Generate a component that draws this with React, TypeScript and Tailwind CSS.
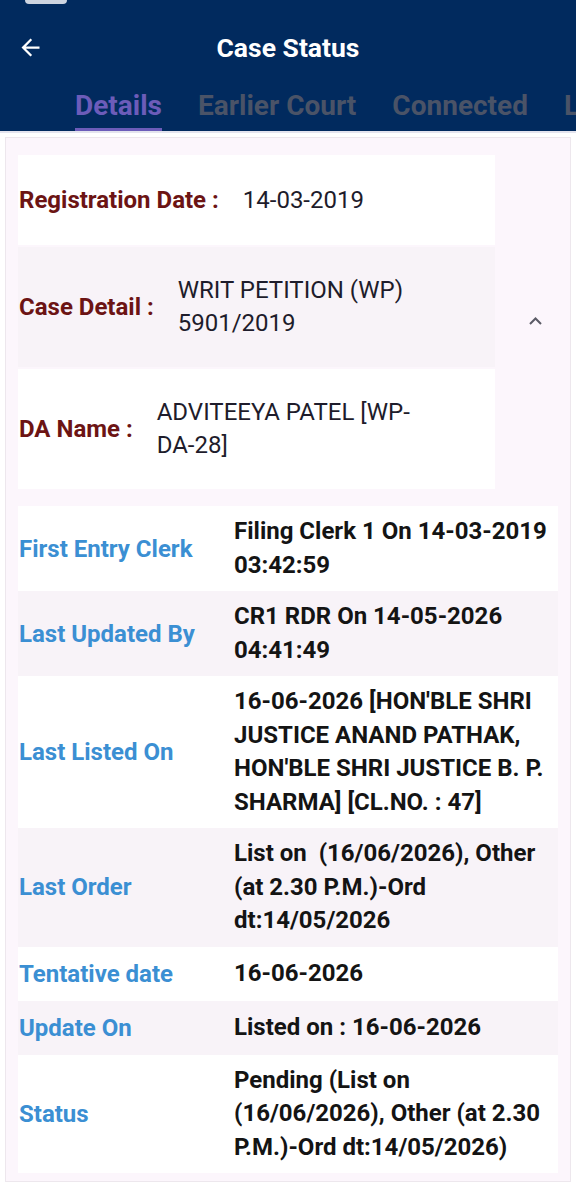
import { ReactNode } from 'react';

const rows: { label: string; value: string; alt?: boolean }[] = [
  { label: 'First Entry Clerk', value: 'Filing Clerk 1 On 14-03-2019 03:42:59' },
  { label: 'Last Updated By', value: 'CR1 RDR On 14-05-2026 04:41:49', alt: true },
  {
    label: 'Last Listed On',
    value: "16-06-2026 [HON'BLE SHRI JUSTICE ANAND PATHAK, HON'BLE SHRI JUSTICE B. P. SHARMA] [CL.NO. : 47]",
  },
  { label: 'Last Order', value: 'List on \u00a0(16/06/2026), Other (at 2.30 P.M.)-Ord dt:14/05/2026', alt: true },
  { label: 'Tentative date', value: '16-06-2026' },
  { label: 'Update On', value: 'Listed on : 16-06-2026', alt: true },
  { label: 'Status', value: 'Pending (List on (16/06/2026), Other (at 2.30 P.M.)-Ord dt:14/05/2026)' },
];

function InfoBlock({ label, children, alt }: { label: string; children: ReactNode; alt?: boolean }) {
  return (
    <div className={`flex items-center py-[27px] pr-[60px] pl-[1px] ${alt ? 'bg-[#f8f3f8]' : 'bg-white'}`}>
      <span className="shrink-0 whitespace-nowrap font-bold text-[#6c1414]">{label}</span>
      <span className="ml-[24px] leading-[33px] text-[#1e1c2b]">{children}</span>
    </div>
  );
}

export default function App() {
  return (
    <div className="min-h-screen overflow-hidden bg-white font-['Roboto','Noto_Sans',sans-serif] text-[24px]">
      {/* App bar */}
      <header className="flex h-[131px] flex-col overflow-hidden bg-[#012a5e]">
        <div className="h-[4px] pl-[25px]">
          <div className="h-[4px] w-[42px] rounded-b-[6px] bg-[#cdd4e0]" />
        </div>
        <div className="grid h-[86px] grid-cols-[1fr_auto_1fr] items-center">
          <div className="pl-[17px]">
            <svg width="27" height="27" viewBox="0 0 24 24" fill="white">
              <path d="M20 11H7.83l5.59-5.59L12 4l-8 8 8 8 1.41-1.41L7.83 13H20v-2z" />
            </svg>
          </div>
          <h1 className="pt-[2px] text-[26.5px] font-bold text-white">Case Status</h1>
          <div />
        </div>
        <nav className="flex h-[41px] pl-[57px] text-[28px] font-bold whitespace-nowrap">
          <div className="flex flex-col justify-between px-[18px]">
            <span className="leading-[32px] text-[#6c5cb9]">Details</span>
            <span className="h-[3px] bg-[#6c5cb9]" />
          </div>
          <div className="px-[18px] leading-[32px] text-[#4a5367]">Earlier Court</div>
          <div className="px-[18px] leading-[32px] text-[#4a5367]">Connected</div>
          <div className="px-[18px] leading-[32px] text-[#4a5367]">Listing</div>
        </nav>
      </header>
      <div className="h-[2px] bg-[#e4e4ee]" />

      {/* Details card */}
      <main className="mx-[5px] mt-[4px] border border-[#ede7ed] bg-[#fcf6fc] px-[12px] pt-[17px] pb-[8px]">
        <div className="flex">
          <div className="flex w-[477px] flex-col gap-[2px]">
            <InfoBlock label="Registration Date :">14-03-2019</InfoBlock>
            <InfoBlock label="Case Detail :" alt>
              WRIT PETITION (WP) 5901/2019
            </InfoBlock>
            <InfoBlock label="DA Name :">ADVITEEYA PATEL [WP-DA-28]</InfoBlock>
          </div>
          <div className="pt-[162px] pl-[34px]">
            <svg width="13" height="8" viewBox="0 0 13 8" fill="none" stroke="#5b5b66" strokeWidth="2">
              <path d="M1 7l5.5-5.5L12 7" />
            </svg>
          </div>
        </div>

        <div className="mt-[17px] flex flex-col">
          {rows.map((r) => (
            <div
              key={r.label}
              className={`grid grid-cols-[216px_1fr] items-center py-[9px] ${r.alt ? 'bg-[#f8f3f8]' : 'bg-white'}`}
            >
              <span className="pl-[1px] font-bold text-[#3b8fd3]">{r.label}</span>
              <span className="pr-[4px] leading-[33.5px] font-bold text-[#141414]">{r.value}</span>
            </div>
          ))}
        </div>
      </main>
    </div>
  );
}
